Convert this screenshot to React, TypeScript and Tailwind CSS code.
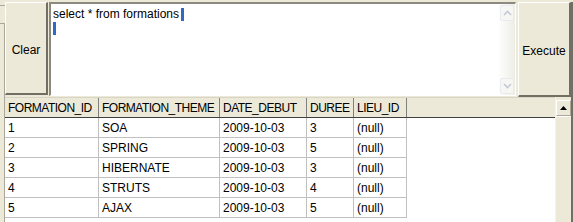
import React from "react";

const rows = [
  ["1", "SOA", "2009-10-03", "3", "(null)"],
  ["2", "SPRING", "2009-10-03", "5", "(null)"],
  ["3", "HIBERNATE", "2009-10-03", "3", "(null)"],
  ["4", "STRUTS", "2009-10-03", "4", "(null)"],
  ["5", "AJAX", "2009-10-03", "5", "(null)"],
];
const cols = [
  { name: "FORMATION_ID", w: "w-[94px]" },
  { name: "FORMATION_THEME", w: "w-[121px]" },
  { name: "DATE_DEBUT", w: "w-[87px]" },
  { name: "DUREE", w: "w-[47px]" },
  { name: "LIEU_ID", w: "w-[53px]" },
];

function ArrowUp() {
  return (
    <svg width="9" height="6" viewBox="0 0 9 6">
      <path d="M1 5 L4.5 1.5 L8 5" fill="none" stroke="#c3c9d5" strokeWidth="1.6" />
    </svg>
  );
}
function ArrowDown() {
  return (
    <svg width="9" height="6" viewBox="0 0 9 6">
      <path d="M1 1 L4.5 4.5 L8 1" fill="none" stroke="#c3c9d5" strokeWidth="1.6" />
    </svg>
  );
}

export default function App() {
  return (
    <div className="w-[573px] h-[222px] bg-[#ece9d8] flex flex-col overflow-hidden font-['Liberation_Sans',Arial,sans-serif] text-[12px] text-black">
      <div className="h-[97px] flex shrink-0">
        <div className="w-[5px] flex flex-col">
          <div className="h-[6px] border-b border-[#a9a79a]" />
          <div className="h-[18px] border-b border-[#a9a79a]" />
          <div className="flex-1 border-r border-[#a9a79a]" />
        </div>
        <div className="w-[43px] mt-[2px] mb-[2px] pt-[3px] border-t border-l border-white border-r-2 border-b-2 border-r-[#716f64] border-b-[#716f64] flex items-center justify-center">
          Clear
        </div>
        <div className="flex-1 mt-[2px] mb-[1px] ml-[1px] mr-[2px] border-t-2 border-l-2 border-t-[#8c8a7e] border-l-[#8c8a7e] border-r border-b border-r-white border-b-white bg-white flex">
          <div className="flex-1 pl-[2px] pt-[3px] leading-[14px]">
            <div className="flex items-start">
              <span>select * from formations</span>
              <span className="inline-block w-[3px] h-[13px] bg-[#316ac5] ml-[2px] mt-[1px]" />
            </div>
            <div className="w-[3px] h-[13px] bg-[#316ac5] mt-[1px]" />
          </div>
          <div className="w-[16px] bg-gradient-to-r from-[#fdfdfd] to-[#eeede5] flex flex-col justify-between py-[1px]">
            <div className="h-[16px] mx-[1px] rounded-[2px] border border-[#e8ebf0] bg-[#f6f6f3] flex items-center justify-center">
              <ArrowUp />
            </div>
            <div className="h-[16px] mx-[1px] rounded-[2px] border border-[#e8ebf0] bg-[#f6f6f3] flex items-center justify-center">
              <ArrowDown />
            </div>
          </div>
        </div>
        <div className="w-[53px] mt-[2px] mb-0 pt-[3px] border-t border-l border-white border-r-2 border-b-2 border-r-[#716f64] border-b-[#716f64] flex items-center justify-center">
          Execute
        </div>
        <div className="w-[2px] bg-[#716f64] mt-[2px]" />
      </div>
      <div className="flex-1 flex min-h-0">
        <div className="w-[5px] border-r border-[#a9a79a]" />
        <div className="flex-1 bg-white flex flex-col">
          <div className="h-[21px] bg-[#ece9d8] border-b border-[#404040] border-t border-t-[#d8d5c5] flex">
            {cols.map((c) => (
              <div key={c.name} className={`${c.w} border-r border-[#808080] pl-[3px] flex items-center whitespace-nowrap overflow-hidden tracking-[-0.5px]`}>
                {c.name}
              </div>
            ))}
          </div>
          {rows.map((r, i) => (
            <div key={i} className="h-[20px] flex">
              {r.map((v, j) => (
                <div key={j} className={`${cols[j].w} border-r border-b border-[#c0c0c0] pl-[3px] flex items-center`}>
                  {v}
                </div>
              ))}
            </div>
          ))}
        </div>
        <div className="w-[16px] bg-[#ece9d8] border-l border-[#f5f3ea] flex flex-col">
          <div className="h-[16px] mt-[3px] border-t border-l border-white border-r border-b border-r-[#aca899] border-b-[#aca899] flex items-center justify-center">
            <svg width="7" height="4" viewBox="0 0 7 4">
              <path d="M0 4 L3.5 0 L7 4 Z" fill="black" />
            </svg>
          </div>
          <div className="flex-1 border-t border-white" />
        </div>
        <div className="w-[2px] bg-[#716f64]" />
      </div>
    </div>
  );
}
